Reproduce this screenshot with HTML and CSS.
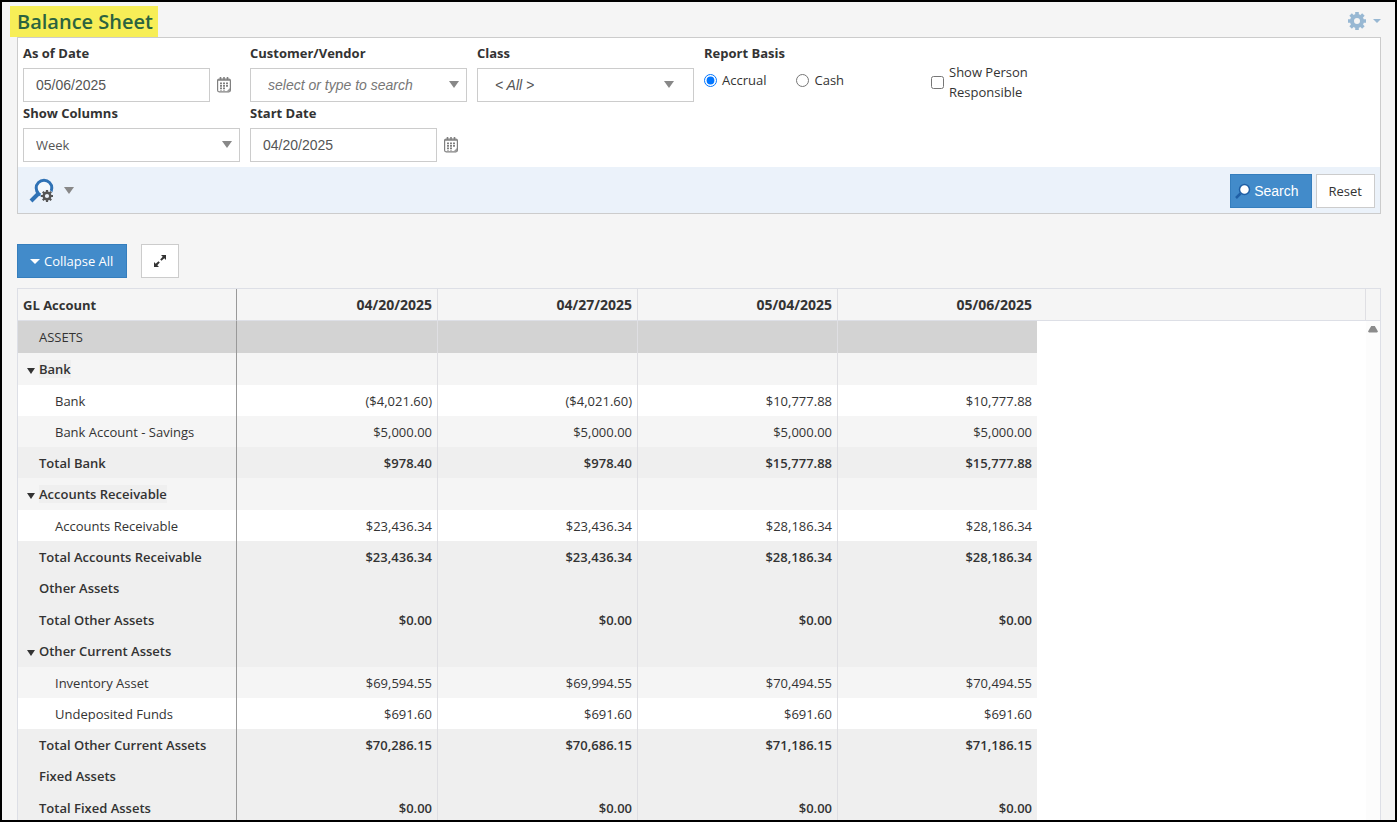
FILE: index.html
```
<!DOCTYPE html>
<html lang="en">
  <head>
    <meta charset="UTF-8" />
    <meta name="viewport" content="width=device-width, initial-scale=1.0" />
    <title>Balance Sheet</title>
    <link rel="stylesheet" href="styles.css">
  </head>
  <body>
    <div class="page-header">
      <h1>Balance Sheet</h1>
      <button class="settings" type="button" aria-label="Settings">
        <svg width="18" height="18" viewBox="0 0 18 18">
          <circle cx="9" cy="9" r="5" fill="none" stroke="#98b8d3" stroke-width="4" />
          <path d="M9 0v3M9 15v3M0 9h3M15 9h3M2.600 2.600l2.200 2.200M13.200 13.200l2.200 2.200M2.600 15.400l2.200-2.200M13.200 4.800l2.200-2.200" stroke="#98b8d3" stroke-width="3.600" />
        </svg>
        <span class="caret"></span>
      </button>
    </div>

    <form class="filters">
      <div class="fields">
        <div class="field">
          <label for="as-of">As of Date</label>
          <div class="date">
            <input type="text" id="as-of" value="05/06/2025" />
            <svg class="calendar" width="14" height="16" viewBox="0 0 14 16">
              <rect x=".6" y="2" width="12.800" height="12.800" rx="1.500" fill="#fff" stroke="#808080" stroke-width="1.200" />
              <path d="M1 3h12M3.500 0v3M7 0v3M10.500 0v3" stroke="#808080" stroke-width="1.600" />
              <path d="M4 5.500v8M7 5.500v8M10 5.500v5" stroke="#6a6a6a" stroke-width="1.700" stroke-dasharray="1.800 .7" />
              <path d="M13 11v3.500H9.500z" fill="#999" />
            </svg>
          </div>
        </div>
        <div class="field">
          <label for="customer">Customer/Vendor</label>
          <div class="dropdown">
            <input type="text" id="customer" class="hint" placeholder="select or type to search" />
          </div>
        </div>
        <div class="field">
          <label for="class">Class</label>
          <div class="dropdown inset">
            <select id="class" class="hint">
              <option>&lt; All &gt;</option>
            </select>
          </div>
        </div>
        <fieldset class="field basis">
          <legend>Report Basis</legend>
          <div class="radios">
            <label><input type="radio" name="basis" checked />Accrual</label>
            <label><input type="radio" name="basis" />Cash</label>
          </div>
        </fieldset>
        <label class="person"><input type="checkbox" /><span>Show Person Responsible</span></label>
        <div class="field first">
          <label for="columns">Show Columns</label>
          <div class="dropdown">
            <select id="columns">
              <option>Week</option>
            </select>
          </div>
        </div>
        <div class="field">
          <label for="start">Start Date</label>
          <div class="date">
            <input type="text" id="start" value="04/20/2025" />
            <svg class="calendar" width="14" height="16" viewBox="0 0 14 16">
              <rect x=".6" y="2" width="12.800" height="12.800" rx="1.500" fill="#fff" stroke="#808080" stroke-width="1.200" />
              <path d="M1 3h12M3.500 0v3M7 0v3M10.500 0v3" stroke="#808080" stroke-width="1.600" />
              <path d="M4 5.500v8M7 5.500v8M10 5.500v5" stroke="#6a6a6a" stroke-width="1.700" stroke-dasharray="1.800 .7" />
              <path d="M13 11v3.500H9.500z" fill="#999" />
            </svg>
          </div>
        </div>
      </div>
      <div class="actions">
        <button class="saved" type="button" aria-label="Saved searches">
          <svg width="26" height="26" viewBox="0 0 26 26">
            <circle cx="15" cy="10" r="7.800" fill="#f4f8fc" stroke="#2f72b5" stroke-width="3" />
            <path d="M9.500 15.500L2 23" stroke="#2f72b5" stroke-width="4" />
            <circle cx="18" cy="18" r="6.500" fill="#ebf2fa" />
            <circle cx="18" cy="18" r="3.300" fill="none" stroke="#555" stroke-width="2.400" />
            <path d="M18 12v2.500M18 21.500V24M12 18h2.500M21.500 18H24M13.800 13.800l1.700 1.700M20.500 20.500l1.700 1.700M13.800 22.200l1.700-1.700M20.500 15.500l1.700-1.700" stroke="#555" stroke-width="2.200" />
          </svg>
          <span class="arrow"></span>
        </button>
        <button class="btn primary search" type="button">
          <svg width="16" height="16" viewBox="0 0 16 16">
            <path d="M5.500 10.500L1 15" stroke="#1f5fa5" stroke-width="2.500" />
            <circle cx="9.500" cy="6.500" r="5" fill="#fff" stroke="#1f5fa5" stroke-width="1.500" />
          </svg>
          Search
        </button>
        <button class="btn" type="reset">Reset</button>
      </div>
    </form>

    <div class="toolbar">
      <button class="btn primary collapse" type="button"><span class="caret"></span>Collapse All</button>
      <button class="btn expand" type="button" aria-label="Expand">
        <svg width="14" height="14" viewBox="0 0 14 14" fill="#333">
          <path d="M8 1h5v5l-1.700-1.700-2.800 2.500-1.300-1.300 2.500-2.800zM6 13H1V8l1.700 1.700 2.800-2.500 1.300 1.300-2.500 2.800z" />
        </svg>
      </button>
    </div>

    <div class="report">
      <table>
        <colgroup>
          <col class="account" />
          <col class="amount wide" />
          <col class="amount" />
          <col class="amount" />
          <col class="amount last" />
          <col />
          <col class="bar" />
        </colgroup>
        <thead>
          <tr>
            <th>GL Account</th>
            <th>04/20/2025</th>
            <th>04/27/2025</th>
            <th>05/04/2025</th>
            <th>05/06/2025</th>
            <th></th>
            <th></th>
          </tr>
        </thead>
        <tbody>
          <tr class="section">
            <td>ASSETS</td><td></td><td></td><td></td><td></td><td></td>
            <td><button class="scroll-up" type="button" aria-label="Scroll up"></button></td>
          </tr>
          <tr class="group light">
            <td><span class="toggle"></span><span class="name">Bank</span></td><td></td><td></td><td></td><td></td><td></td><td></td>
          </tr>
          <tr>
            <td>Bank</td><td>($4,021.60)</td><td>($4,021.60)</td><td>$10,777.88</td><td>$10,777.88</td><td></td><td></td>
          </tr>
          <tr class="alt">
            <td>Bank Account - Savings</td><td>$5,000.00</td><td>$5,000.00</td><td>$5,000.00</td><td>$5,000.00</td><td></td><td></td>
          </tr>
          <tr class="total">
            <td>Total Bank</td><td>$978.40</td><td>$978.40</td><td>$15,777.88</td><td>$15,777.88</td><td></td><td></td>
          </tr>
          <tr class="group light">
            <td><span class="toggle"></span><span class="name">Accounts Receivable</span></td><td></td><td></td><td></td><td></td><td></td><td></td>
          </tr>
          <tr>
            <td>Accounts Receivable</td><td>$23,436.34</td><td>$23,436.34</td><td>$28,186.34</td><td>$28,186.34</td><td></td><td></td>
          </tr>
          <tr class="total">
            <td>Total Accounts Receivable</td><td>$23,436.34</td><td>$23,436.34</td><td>$28,186.34</td><td>$28,186.34</td><td></td><td></td>
          </tr>
          <tr class="group">
            <td>Other Assets</td><td></td><td></td><td></td><td></td><td></td><td></td>
          </tr>
          <tr class="total">
            <td>Total Other Assets</td><td>$0.00</td><td>$0.00</td><td>$0.00</td><td>$0.00</td><td></td><td></td>
          </tr>
          <tr class="group">
            <td><span class="toggle"></span><span class="name">Other Current Assets</span></td><td></td><td></td><td></td><td></td><td></td><td></td>
          </tr>
          <tr class="alt">
            <td>Inventory Asset</td><td>$69,594.55</td><td>$69,994.55</td><td>$70,494.55</td><td>$70,494.55</td><td></td><td></td>
          </tr>
          <tr>
            <td>Undeposited Funds</td><td>$691.60</td><td>$691.60</td><td>$691.60</td><td>$691.60</td><td></td><td></td>
          </tr>
          <tr class="total">
            <td>Total Other Current Assets</td><td>$70,286.15</td><td>$70,686.15</td><td>$71,186.15</td><td>$71,186.15</td><td></td><td></td>
          </tr>
          <tr class="group">
            <td>Fixed Assets</td><td></td><td></td><td></td><td></td><td></td><td></td>
          </tr>
          <tr class="total">
            <td>Total Fixed Assets</td><td>$0.00</td><td>$0.00</td><td>$0.00</td><td>$0.00</td><td></td><td></td>
          </tr>
        </tbody>
      </table>
    </div>
  </body>
</html>
```
FILE: styles.css
```
* {
  box-sizing: border-box;
}
body {
  margin: 0;
  height: 100vh;
  display: flex;
  flex-direction: column;
  overflow: hidden;
  border: 2px solid #000;
  padding: 0 14px 0 15px;
  background-color: #f5f5f5;
  color: #333;
  font-family: "Open Sans", "Noto Sans", sans-serif;
  font-size: 13px;
  line-height: 20px;
}
svg {
  display: block;
  flex: none;
}
button,
input,
select {
  font: inherit;
  color: inherit;
}
button {
  cursor: pointer;
}

/* title */
.page-header {
  display: flex;
  justify-content: space-between;
  align-items: flex-end;
  height: 35px;
}
h1 {
  margin: 0 0 0 -7px;
  padding: 0 5px 0 7px;
  background-color: #f7ee57;
  color: #2b6340;
  font-size: 20px;
  font-weight: 600;
  line-height: 31px;
}
.settings {
  display: flex;
  align-items: center;
  gap: 7px;
  padding: 0 0 7px;
  border: 0;
  background: none;
  color: #98b8d3;
}
.caret {
  border: 4px solid transparent;
  border-top-color: currentColor;
  border-bottom: 0;
}

/* search filters */
.filters {
  flex: none;
  border: 1px solid #ccc;
  background-color: #fff;
}
.fields {
  display: grid;
  grid-template-columns: repeat(5, 227px);
  row-gap: 1px;
  padding: 5px;
}
.field {
  width: 217px;
}
.first {
  grid-column: 1;
}
.field > label,
legend {
  display: block;
  margin-bottom: 5px;
  padding: 0;
  font-weight: 700;
}
.date {
  display: flex;
  align-items: center;
  gap: 7px;
}
.date input {
  width: 187px;
}
.field input[type="text"],
select {
  height: 34px;
  padding: 0 12px;
  border: 1px solid #ccc;
  border-radius: 0;
  background-color: #fff;
  color: #555;
  appearance: none;
}
.field input[type="text"] {
  font-family: "Liberation Sans", Arial, sans-serif;
  font-size: 14px;
}
.dropdown {
  position: relative;
}
.dropdown input,
.dropdown select {
  width: 100%;
}
.field input.hint,
.field select.hint {
  padding-left: 17px;
  font-family: "Liberation Sans", Arial, sans-serif;
  font-size: 14px;
  font-style: italic;
}
.hint::placeholder {
  color: #777;
}
.arrow,
.dropdown::after {
  border: 5px solid transparent;
  border-top: 7px solid #888;
  border-bottom: 0;
}
.dropdown::after {
  content: "";
  position: absolute;
  top: 13px;
  right: 8px;
  pointer-events: none;
}
.dropdown.inset::after {
  right: 20px;
}
.basis {
  margin: 0;
  padding: 0;
  border: 0;
}
.radios {
  display: flex;
  gap: 30px;
  margin-top: 2px;
}
.radios label,
.person {
  display: flex;
  align-items: center;
  gap: 5px;
}
.field input[type="radio"],
.person input {
  flex: none;
  width: 13px;
  height: 13px;
  margin: 0;
}
.person {
  align-self: end;
  width: 100px;
}
.actions {
  display: flex;
  align-items: center;
  gap: 4px;
  height: 46px;
  padding: 1px 5px 0 11px;
  background-color: #ebf2fa;
}
.saved {
  display: flex;
  align-items: center;
  gap: 9px;
  margin-right: auto;
  padding: 0;
  border: 0;
  background: none;
}
.btn {
  display: flex;
  align-items: center;
  height: 34px;
  padding: 0 12px;
  border: 1px solid #ccc;
  background-color: #fff;
}
.primary {
  border-color: #357ebd;
  background-color: #428bca;
  color: #fff;
}
.search {
  gap: 3px;
  padding-left: 4px;
  font-family: "Liberation Sans", Arial, sans-serif;
  font-size: 14px;
}

/* report */
.toolbar {
  display: flex;
  gap: 14px;
  margin: 30px 0 10px;
}
.collapse {
  gap: 4px;
  min-width: 110px;
}
.collapse .caret {
  border-width: 5px 5px 0;
}
.expand {
  padding: 0 11px;
}
.report {
  flex: 1;
  min-height: 0;
  overflow: hidden;
  border: 1px solid #dddfe6;
  border-bottom: 0;
  background-color: #fff;
}
table {
  width: 100%;
  table-layout: fixed;
  border-collapse: separate;
  border-spacing: 0;
}
.account {
  width: 219px;
}
.amount {
  width: 200px;
}
.wide {
  width: 201px;
}
.last {
  width: 199px;
}
.bar {
  width: 14px;
}
th,
td {
  height: 31px;
  padding: 0 5px;
  border-right: 1px solid #dfdfe3;
  text-align: right;
  white-space: nowrap;
}
th {
  height: 32px;
  border-bottom: 1px solid #dddfe6;
  background-color: #f5f5f5;
  font-size: 14px;
  font-weight: 700;
}
th:first-child,
td:first-child {
  border-right-color: #999;
  text-align: left;
}
th:first-child {
  font-size: 13px;
}
th:nth-child(5),
th:last-child,
td:nth-child(n + 5) {
  border-right: 0;
}
td:first-child {
  padding-left: 37px;
}
.section td:first-child,
.total td:first-child,
.group td:first-child {
  padding-left: 21px;
}
.alt td {
  background-color: #f5f5f5;
}
.total td,
.group td {
  background-color: #efefef;
  font-weight: 600;
}
.group td,
.section td {
  height: 32px;
}
.light td {
  background-color: #f5f5f5;
}
.section td {
  background-color: #d3d3d3;
  font-weight: 500;
}
tbody tr td:nth-child(6) {
  background-color: #fff;
}
tbody tr td:nth-child(7) {
  padding: 0;
  background-color: #fcfcfc;
}
.name {
  background-color: #efefef;
}
.toggle {
  display: inline-block;
  margin: 0 4px 0 -12px;
  border: 4px solid transparent;
  border-top: 6px solid #333;
  border-bottom: 0;
}
.scroll-up {
  display: block;
  width: 10px;
  height: 7px;
  margin: 0 auto 16px 2px;
  padding: 0;
  border: 0;
  background-color: #8b8b8b;
  clip-path: polygon(35% 0, 65% 0, 100% 85%, 90% 100%, 10% 100%, 0 85%);
}
```
